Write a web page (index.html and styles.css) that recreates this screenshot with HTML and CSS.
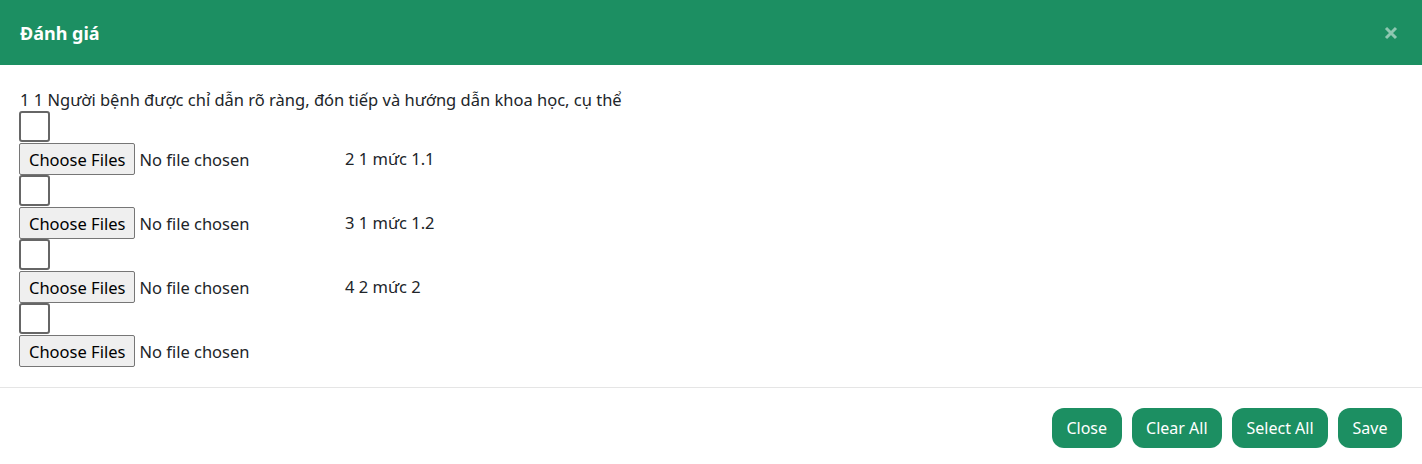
FILE: index.html
```html
<!DOCTYPE html>
<html lang="vi">
<head>
<meta charset="utf-8">
<title>Đánh giá</title>
<link rel="stylesheet" href="styles.css">
</head>
<body>
<div class="modal">
  <div class="modal-header">
    <h5 class="modal-title">Đánh giá</h5>
    <button class="btn-close" type="button" aria-label="Close">
      <svg width="14" height="14" viewBox="0 0 14 14"><path d="M2 2L12 12M12 2L2 12" stroke="currentColor" stroke-width="3" stroke-linecap="butt"/></svg>
    </button>
  </div>
  <div class="modal-body">
    <div class="question">1 1 Người bệnh được chỉ dẫn rõ ràng, đón tiếp và hướng dẫn khoa học, cụ thể</div>
    <div class="check-row"><input type="checkbox" class="check"></div>
    <div class="file-row"><input type="file" multiple class="file"><span class="label">2 1 mức 1.1</span></div>
    <div class="check-row"><input type="checkbox" class="check"></div>
    <div class="file-row"><input type="file" multiple class="file"><span class="label">3 1 mức 1.2</span></div>
    <div class="check-row"><input type="checkbox" class="check"></div>
    <div class="file-row"><input type="file" multiple class="file"><span class="label">4 2 mức 2</span></div>
    <div class="check-row"><input type="checkbox" class="check"></div>
    <div class="file-row"><input type="file" multiple class="file"></div>
  </div>
  <div class="modal-footer">
    <button class="btn" type="button">Close</button>
    <button class="btn" type="button">Clear All</button>
    <button class="btn" type="button">Select All</button>
    <button class="btn" type="button">Save</button>
  </div>
</div>
</body>
</html>
```

FILE: styles.css
```css
html, body {
  margin: 0;
  padding: 0;
  background: #fff;
}
body {
  font-family: "Noto Sans", "Open Sans", sans-serif;
  font-size: 16.5px;
  color: #212529;
}
.modal {
  width: 1422px;
  height: 464px;
  display: flex;
  flex-direction: column;
}
.modal-header {
  height: 65px;
  background: #1c8f62;
  display: flex;
  align-items: center;
  justify-content: space-between;
  padding: 0 20px;
  box-sizing: border-box;
}
.modal-title {
  margin: 0;
  color: #fff;
  font-size: 18px;
  font-weight: 700;
}
.btn-close {
  border: 0;
  background: transparent;
  color: rgba(255,255,255,0.5);
  padding: 0;
  margin-right: 4px;
  width: 14px;
  height: 14px;
  display: flex;
}
.modal-body {
  padding: 23px 20px 20px 19px;
  border-bottom: 1px solid #e5e5e5;
}
.question {
  line-height: 24px;
  height: 23px;
  margin-left: 1px;
}
.check-row {
  height: 32px;
}
.check {
  appearance: none;
  -webkit-appearance: none;
  margin: 0;
  width: 31px;
  height: 31px;
  border: 2px solid #666;
  border-radius: 3px;
  background: #fff;
  box-sizing: border-box;
  display: block;
}
.file-row {
  height: 32px;
  display: flex;
  align-items: center;
}
.file {
  width: 326px;
  font-family: inherit;
  font-size: 16.5px;
  color: #212529;
}
.file::file-selector-button {
  font-family: inherit;
  font-size: 16.5px;
  height: 32px;
  padding: 0 9px;
  margin-right: 4px;
  background: #efefef;
  border: 1px solid #767676;
  border-radius: 2px;
  color: #000;
}
.label {
  line-height: 24px;
}
.modal-footer {
  flex: 1;
  display: flex;
  justify-content: flex-end;
  align-items: flex-start;
  gap: 10px;
  padding: 20px 20px 0 0;
}
.btn {
  height: 40px;
  padding: 0 14.5px;
  background: #1c8f62;
  color: #fff;
  border: 0;
  border-radius: 12px;
  font-family: inherit;
  font-size: 16px;
}
```
